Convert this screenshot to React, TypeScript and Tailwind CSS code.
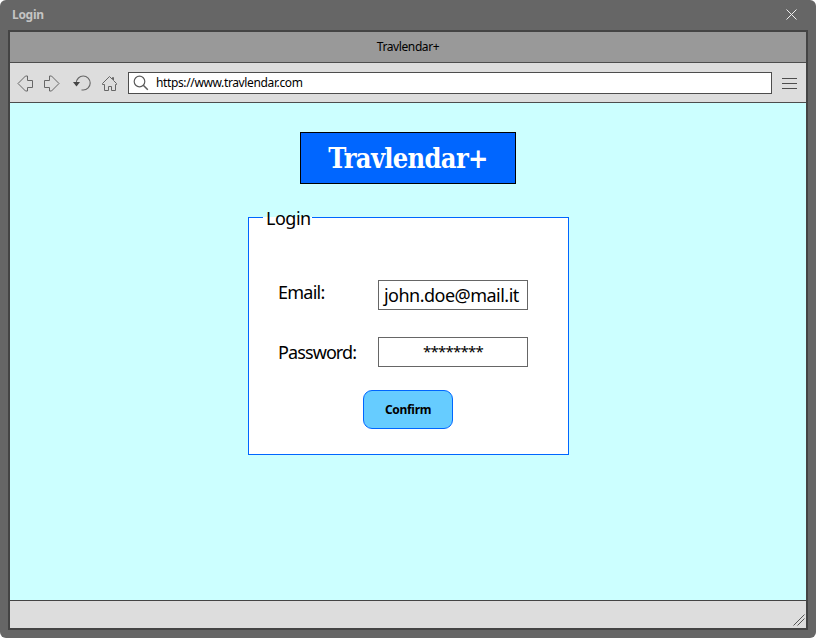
import React from 'react';

const ARROW = 'M1 8.5 8.5 1H10.5V5.5H15.5V12.5H10.5V16H8.5Z';

function Toolbar() {
  return (
    <div className="flex h-10 shrink-0 items-center border-b border-[#4d4d4d] bg-[#dddddd] pl-[7px]">
      <svg className="mt-px shrink-0" width="17" height="17" viewBox="0 0 17 17" fill="none" stroke="#666666">
        <path d={ARROW} />
      </svg>
      <svg className="mt-px ml-[9px] shrink-0 -scale-x-100" width="17" height="17" viewBox="0 0 17 17" fill="none" stroke="#666666">
        <path d={ARROW} />
      </svg>
      <svg className="mt-px ml-[12px] shrink-0" width="20" height="18" viewBox="0 0 20 18" fill="none" stroke="#666666" strokeWidth="1.1">
        <path d="M4.2 9C4.5 5 7.5 2 11.2 2a7 7 0 0 1 0 14H9.5" />
        <path d="M1 8h7L4.5 12.5Z" fill="#444" stroke="none" />
      </svg>
      <svg className="mt-px ml-[9px] shrink-0" width="17" height="17" viewBox="0 0 17 17" fill="none" stroke="#666666">
        <path d="M1.5 8.5 8.5 1.5 11.5 4.5V2.5H12.5V5.5L15.5 8.5V9.5H14.5V15.5H10.5V11.5H7.5V15.5H3.5V9.5H1.5Z" />
      </svg>
      <div className="ml-[10px] flex h-[22px] w-[644px] items-center border border-[#4d4d4d] bg-white">
        <svg className="ml-[4px] shrink-0" width="16" height="16" viewBox="0 0 16 16" fill="none" stroke="#5c5c5c" strokeWidth="1.2">
          <circle cx="6.5" cy="6.5" r="5.3" />
          <path d="m10.3 10.3 4.5 4.5" strokeWidth="1.5" />
        </svg>
        <span className="ml-[7px] text-[12px] leading-[18px] tracking-[-0.37px]">https://www.travlendar.com</span>
      </div>
      <div className="mt-px ml-[10px] flex w-[15px] flex-col gap-1">
        <div className="h-px bg-[#4d4d4d]" />
        <div className="h-px bg-[#4d4d4d]" />
        <div className="h-px bg-[#4d4d4d]" />
      </div>
    </div>
  );
}

function LoginPanel() {
  return (
    <div className="relative mt-[33px] ml-[238px] h-[238px] w-[321px] border border-[#0066ff] bg-white pt-[62px] text-[18px]">
      <div className="absolute -top-[12px] left-[14px] h-[25px] w-[49px] pl-[3px] leading-[25px] tracking-[-0.5px]">
        <div className="absolute top-[11px] left-0 h-px w-full bg-white" />
        <span className="relative">Login</span>
      </div>
      <div className="flex h-[30px] pl-[29px]">
        <span className="w-[100px] leading-[24px] tracking-[-0.75px]">Email:</span>
        <div className="h-[30px] w-[150px] border border-[#666666] pl-[5px] leading-[28px] tracking-[-0.52px]">john.doe@mail.it</div>
      </div>
      <div className="mt-[27px] flex h-[30px] pl-[29px]">
        <span className="w-[100px] leading-[30px] tracking-[-0.9px]">Password:</span>
        <div className="h-[30px] w-[150px] border border-[#666666] text-center text-[15px] leading-[27px] tracking-[-0.75px]">********</div>
      </div>
      <div className="mt-[23px] ml-[114px] flex h-[39px] w-[90px] items-center justify-center rounded-[9px] border border-[#0066ff] bg-[#66ccff] text-[12px] font-bold tracking-[-0.3px]">
        Confirm
      </div>
    </div>
  );
}

export default function App() {
  return (
    <div className="h-[638px] w-[816px] bg-white font-['Noto_Sans',sans-serif] text-black">
      <div className="flex h-full flex-col rounded-[6px] bg-[#666666] px-2">
        <div className="flex h-[30px] shrink-0 items-center justify-between pr-[11px] pl-1">
          <span className="text-[12px] leading-[32px] font-bold tracking-[-0.3px] text-[#c4c4c4]">Login</span>
          <svg className="mb-[2px]" width="11" height="11" viewBox="0 0 11 11" stroke="#eeeeee">
            <path d="m.5.5 10 10M10.5.5l-10 10" />
          </svg>
        </div>
        <div className="flex h-[600px] w-[800px] flex-col border-2 border-[#444444]">
          <div className="h-[31px] shrink-0 border-b border-[#4d4d4d] bg-[#999999] text-center text-[12px] leading-[30px] tracking-[-0.4px]">
            Travlendar+
          </div>
          <Toolbar />
          <div className="h-[497px] shrink-0 bg-[#ccffff] pt-[29px]">
            <div className="ml-[290px] flex h-[52px] w-[216px] items-center justify-center border border-black bg-[#0066ff] pt-[2px] font-['DejaVu_Serif_Condensed','DejaVu_Serif',serif] text-[27px] font-bold tracking-[-0.7px] text-white">
              Travlendar+
            </div>
            <LoginPanel />
          </div>
          <div className="flex h-[28px] items-end justify-end border-t border-[#444444] bg-[#dddddd] pr-px pb-[2px]">
            <svg width="12" height="12" viewBox="0 0 12 12" stroke="#555555">
              <path d="M.5 11.5 11.5.5M4.5 11.5l7-7" />
            </svg>
          </div>
        </div>
      </div>
    </div>
  );
}
